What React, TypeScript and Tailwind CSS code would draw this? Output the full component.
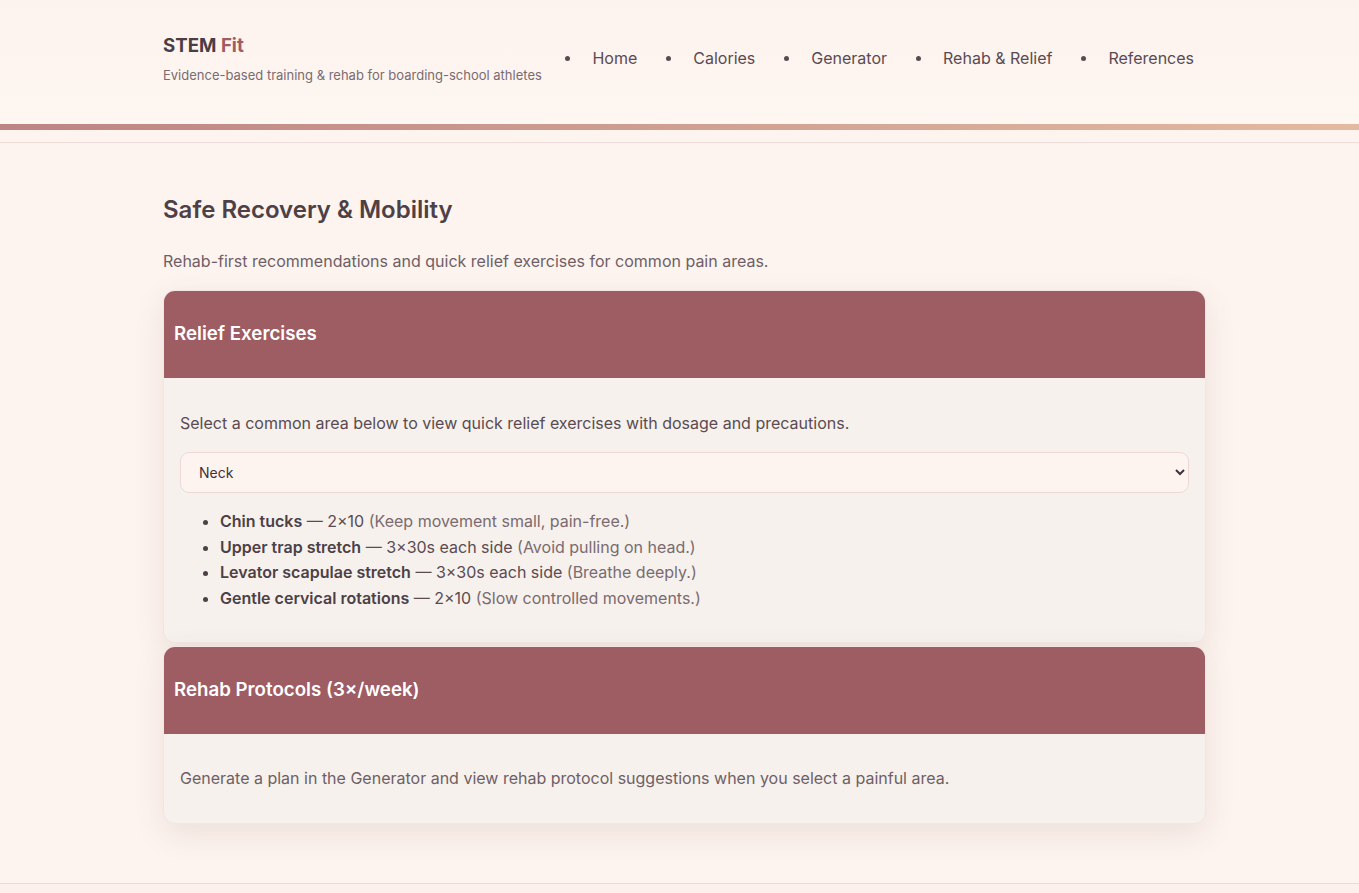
import React, { useState } from "react";

const exercises: Record<string, { name: string; dose: string; note: string }[]> = {
  Neck: [
    { name: "Chin tucks", dose: "2×10", note: "Keep movement small, pain-free." },
    { name: "Upper trap stretch", dose: "3×30s each side", note: "Avoid pulling on head." },
    { name: "Levator scapulae stretch", dose: "3×30s each side", note: "Breathe deeply." },
    { name: "Gentle cervical rotations", dose: "2×10", note: "Slow controlled movements." },
  ],
  "Lower back": [
    { name: "Cat-camel", dose: "2×10", note: "Move gently." },
    { name: "Bird dog", dose: "3×8 each side", note: "Keep spine neutral." },
  ],
};

const navItems = ["Home", "Calories", "Generator", "Rehab & Relief", "References"];

const App = () => {
  const [area, setArea] = useState("Neck");

  return (
    <div className="min-h-screen bg-[#fdf4ef] text-[#4d4046] font-['Inter',sans-serif]">
      {/* HEADER */}
      <header className="bg-gradient-to-b from-[#fdf3ee] to-[#fdf6f1]">
        <div className="w-[1033px] mx-auto h-[124px] flex items-center justify-between">
          <div className="pb-[4px]">
            <div className="text-[18.7px] font-bold leading-6 text-[#4a3d45]">
              STEM <span className="text-[#9e5c63]">Fit</span>
            </div>
            <div className="mt-[8px] text-[13px] text-[#7a6b70]">
              Evidence-based training &amp; rehab for boarding-school athletes
            </div>
          </div>
          <nav className="flex items-center gap-[29px] text-[16px] text-[#5a4b52] pr-[2px] pb-[8px]">
            {navItems.map((item) => (
              <div key={item} className="flex items-center gap-[22px]">
                <span className="w-[5px] h-[5px] rounded-full bg-[#5a4b52]"></span>
                <a href="#">{item}</a>
              </div>
            ))}
          </nav>
        </div>
      </header>
      <div className="h-[6px] bg-gradient-to-r from-[#bc8584] to-[#e3baa0]"></div>
      <div className="h-[12px]"></div>
      <div className="h-px bg-[#f0dcd9]"></div>

      {/* MAIN */}
      <main className="w-[1033px] mx-auto pt-[51px] pb-[59px]">
        <h1 className="text-[24px] font-semibold leading-8 text-[#4d4046]">
          Safe Recovery &amp; Mobility
        </h1>
        <p className="mt-[23px] text-[16px] leading-6 text-[#6f5f66]">
          Rehab-first recommendations and quick relief exercises for common pain areas.
        </p>

        <div className="mt-[17px] -mr-[10px] flex flex-col gap-[3px]">
          {/* Relief card */}
          <section className="rounded-[12px] overflow-hidden bg-[#f6f1ec] shadow-[0_10px_30px_rgba(120,80,70,0.12)] border border-[#f3e6e2]">
            <div className="bg-[#9e5c63] h-[87px] flex items-center px-[10px]">
              <h2 className="text-[18.7px] font-semibold text-white">Relief Exercises</h2>
            </div>
            <div className="px-[16px] pt-[33px] pb-[30px]">
              <p className="text-[16px] leading-6 text-[#5a4b52]">
                Select a common area below to view quick relief exercises with dosage and precautions.
              </p>
              <select
                value={area}
                onChange={(e) => setArea(e.target.value)}
                className="mt-[17px] w-full h-[41px] rounded-[9px] border border-[#eed8d6] bg-[#fdf4ef] px-[14px] text-[14px] text-[#3f3338]"
              >
                {Object.keys(exercises).map((k) => (
                  <option key={k}>{k}</option>
                ))}
              </select>
              <ul className="mt-[16px] pl-[40px] list-disc text-[16px] leading-[25.7px] marker:text-[#4d4046]">
                {exercises[area].map((ex) => (
                  <li key={ex.name}>
                    <span className="font-semibold text-[#4d4046]">{ex.name}</span>
                    <span className="text-[#5a4b52]"> — {ex.dose} </span>
                    <span className="text-[#7a6b70]">({ex.note})</span>
                  </li>
                ))}
              </ul>
            </div>
          </section>

          {/* Rehab card */}
          <section className="rounded-[12px] overflow-hidden bg-[#f6f1ec] shadow-[0_10px_30px_rgba(120,80,70,0.12)] border border-[#f3e6e2]">
            <div className="bg-[#9e5c63] h-[87px] flex items-center px-[10px]">
              <h2 className="text-[18.7px] font-semibold text-white">Rehab Protocols (3×/week)</h2>
            </div>
            <div className="px-[16px] h-[89px] flex items-center">
              <p className="text-[16px] leading-6 text-[#6f5f66]">
                Generate a plan in the Generator and view rehab protocol suggestions when you select a painful area.
              </p>
            </div>
          </section>
        </div>
      </main>
      <footer className="border-t border-[#eed8d6] bg-[#fcf0ec] h-[20px]"></footer>
    </div>
  );
};

export default App;
